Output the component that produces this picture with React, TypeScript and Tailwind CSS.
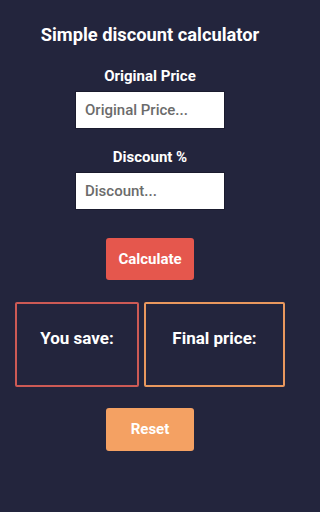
import { useState } from 'react';

export default function App() {
  const [price, setPrice] = useState('');
  const [discount, setDiscount] = useState('');
  const [saved, setSaved] = useState<string | null>(null);
  const [finalPrice, setFinalPrice] = useState<string | null>(null);

  const calculate = () => {
    const p = parseFloat(price);
    const d = parseFloat(discount);
    if (isNaN(p) || isNaN(d)) return;
    const s = (p * d) / 100;
    setSaved(s.toFixed(2));
    setFinalPrice((p - s).toFixed(2));
  };

  const reset = () => {
    setPrice('');
    setDiscount('');
    setSaved(null);
    setFinalPrice(null);
  };

  return (
    <div className="min-h-screen w-full bg-[#23253d] text-white font-['Roboto',sans-serif]">
      <div className="w-[300px] min-h-[512px] flex flex-col items-center">
        <h1 className="mt-[24px] text-[18.3px] leading-[22px] font-bold">Simple discount calculator</h1>

        <label className="mt-[20px] text-[15px] leading-[20px] font-bold">Original Price</label>
        <input
          value={price}
          onChange={e => setPrice(e.target.value)}
          placeholder="Original Price..."
          className="mt-[5px] w-[150px] h-[38px] bg-white border border-[#1a1b2e] px-[9px] text-[15px] font-medium text-[#333] placeholder:text-[#6b6b6b] outline-none"
        />

        <label className="mt-[18px] text-[15px] leading-[20px] font-bold">Discount %</label>
        <input
          value={discount}
          onChange={e => setDiscount(e.target.value)}
          placeholder="Discount..."
          className="mt-[5px] w-[150px] h-[38px] bg-white border border-[#1a1b2e] px-[9px] text-[15px] font-medium text-[#333] placeholder:text-[#6b6b6b] outline-none"
        />

        <button
          onClick={calculate}
          className="mt-[28px] w-[88px] h-[42px] rounded-[3px] bg-[#e5574d] text-[15px] font-bold text-white"
        >
          Calculate
        </button>

        <div className="mt-[22px] flex gap-[5px] px-[15px] w-full">
          <div className="w-[124px] h-[85px] border-2 border-[#cd5a55] rounded-[2px] flex flex-col items-center pt-[24px]">
            <p className="text-[17px] leading-[20px] font-bold">You save:</p>
            {saved && <p className="text-[14px] mt-1">{saved}</p>}
          </div>
          <div className="flex-1 h-[85px] border-2 border-[#e9985e] rounded-[2px] flex flex-col items-center pt-[24px]">
            <p className="text-[17px] leading-[20px] font-bold">Final price:</p>
            {finalPrice && <p className="text-[14px] mt-1">{finalPrice}</p>}
          </div>
        </div>

        <button
          onClick={reset}
          className="mt-[21px] w-[88px] h-[43px] rounded-[3px] bg-[#f4a163] text-[15px] font-bold text-white"
        >
          Reset
        </button>
      </div>
    </div>
  );
}
